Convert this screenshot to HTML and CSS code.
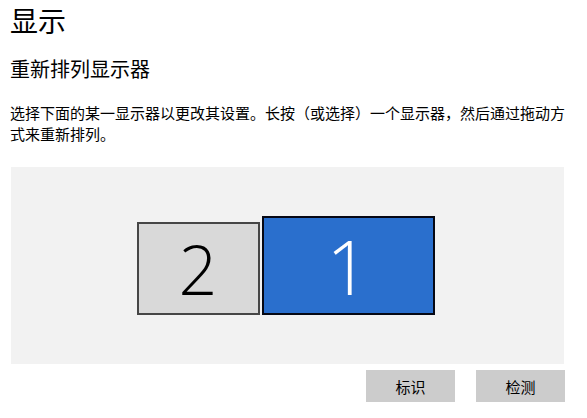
FILE: index.html
```html
<!DOCTYPE html>
<html lang="zh-CN">
<head>
<meta charset="utf-8">
<title>显示</title>
<link rel="stylesheet" href="styles.css">
</head>
<body>
<div class="page">
  <h1 class="title">显示</h1>
  <h2 class="subtitle">重新排列显示器</h2>
  <p class="desc">选择下面的某一显示器以更改其设置。长按（或选择）一个显示器，然后通过拖动方式来重新排列。</p>
  <div class="panel">
    <div class="monitor monitor-2"><span class="num num-2">2</span></div>
    <div class="monitor monitor-1"><span class="num num-1">1</span></div>
  </div>
  <div class="actions">
    <button class="btn">标识</button>
    <button class="btn">检测</button>
  </div>
</div>
</body>
</html>
```

FILE: styles.css
```css
html, body {
  margin: 0;
  padding: 0;
  background: #ffffff;
}

body {
  font-family: "Noto Sans CJK SC", "Noto Sans", sans-serif;
  color: #000000;
}

.page {
  padding: 0 0 0 10px;
}

.title {
  margin: 0;
  font-size: 28px;
  line-height: 40px;
  font-weight: 400;
}

.subtitle {
  margin: 15px 0 0 0;
  font-size: 20px;
  line-height: 28px;
  font-weight: 400;
}

.desc {
  margin: 19px 0 0 0;
  width: 560px;
  font-size: 15px;
  line-height: 21px;
}

.panel {
  margin: 23px 0 0 1px;
  width: 553px;
  height: 197px;
  box-sizing: border-box;
  background: #f2f2f2;
  display: flex;
  justify-content: center;
  align-items: flex-end;
  padding: 0 4px 49px 0;
  gap: 2px;
}

.monitor {
  box-sizing: border-box;
  border: 2px solid #464646;
  display: flex;
  align-items: center;
  justify-content: center;
}

.monitor-2 {
  width: 123px;
  height: 93px;
  background: #d9d9d9;
}

.monitor-1 {
  width: 173px;
  height: 99px;
  background: #2a6fcd;
  border-color: #060814;
}

.num {
  font-family: "Open Sans", "Liberation Sans", sans-serif;
  font-weight: 300;
  line-height: 1;
}

.num-2 {
  font-size: 68px;
  color: #000000;
}

.num-1 {
  font-size: 76px;
  color: #ffffff;
}

.actions {
  margin-top: 6px;
  width: 555px;
  display: flex;
  justify-content: flex-end;
  gap: 21px;
}

.btn {
  width: 89px;
  height: 32px;
  border: none;
  margin: 0;
  padding: 0;
  background: #cccccc;
  font-family: "Noto Sans CJK SC", sans-serif;
  font-size: 15px;
  color: #000000;
}
```
